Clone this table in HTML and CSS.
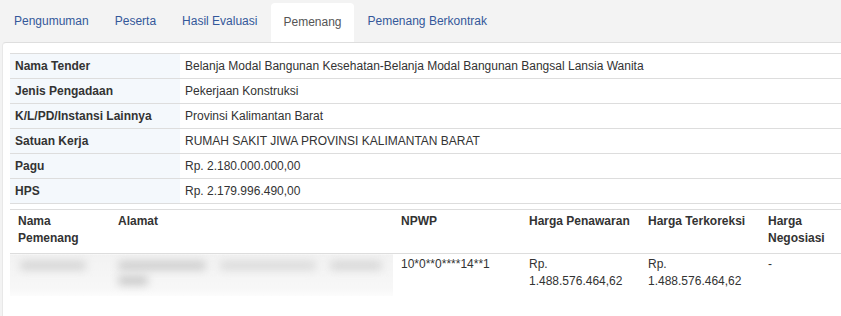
FILE: index.html
```html
<!DOCTYPE html>
<html lang="id">
<head>
<meta charset="utf-8">
<title>Pemenang</title>
<link rel="stylesheet" href="styles.css">
</head>
<body>
<ul class="tabs">
  <li class="tab"><a>Pengumuman</a></li>
  <li class="tab"><a>Peserta</a></li>
  <li class="tab"><a>Hasil Evaluasi</a></li>
  <li class="tab active"><a>Pemenang</a></li>
  <li class="tab"><a>Pemenang Berkontrak</a></li>
</ul>
<div class="panel">
  <table class="info">
    <tr><th>Nama Tender</th><td>Belanja Modal Bangunan Kesehatan-Belanja Modal Bangunan Bangsal Lansia Wanita</td></tr>
    <tr><th>Jenis Pengadaan</th><td>Pekerjaan Konstruksi</td></tr>
    <tr><th>K/L/PD/Instansi Lainnya</th><td>Provinsi Kalimantan Barat</td></tr>
    <tr><th>Satuan Kerja</th><td>RUMAH SAKIT JIWA PROVINSI KALIMANTAN BARAT</td></tr>
    <tr><th>Pagu</th><td>Rp. 2.180.000.000,00</td></tr>
    <tr><th>HPS</th><td>Rp. 2.179.996.490,00</td></tr>
  </table>
  <table class="winners">
    <thead>
      <tr>
        <th class="c-name">Nama Pemenang</th>
        <th class="c-addr">Alamat</th>
        <th class="c-npwp">NPWP</th>
        <th class="c-price">Harga Penawaran</th>
        <th class="c-price2">Harga Terkoreksi</th>
        <th class="c-neg">Harga Negosiasi</th>
      </tr>
    </thead>
    <tbody>
      <tr>
        <td class="blurred"><div class="smudge s-name"></div></td>
        <td class="blurred"><div class="smudge-row"><div class="smudge s-a1"></div><div class="smudge s-a2"></div><div class="smudge s-a3"></div></div><div class="smudge s-a4"></div></td>
        <td>10*0**0****14**1</td>
        <td>Rp.<br>1.488.576.464,62</td>
        <td>Rp.<br>1.488.576.464,62</td>
        <td>-</td>
      </tr>
    </tbody>
  </table>
</div>
</body>
</html>
```

FILE: styles.css
```css
html, body {
  margin: 0;
  padding: 0;
}
body {
  background: #f3f3f3;
  font-family: "Liberation Sans", Arial, sans-serif;
  font-size: 12px;
  color: #333;
  width: 841px;
  height: 316px;
  overflow: hidden;
}
.tabs {
  list-style: none;
  margin: 0;
  padding: 3px 0 0 0;
  display: flex;
  height: 39px;
}
.tab {
  margin-left: 2px;
  padding: 0 12px 2px;
  line-height: 15px;
  display: flex;
  align-items: center;
  border-radius: 4px 4px 0 0;
  color: #34589a;
  position: relative;
  z-index: 1;
}
.tab.active {
  background: #fff;
  color: #555;
  height: 38px;
  padding-bottom: 1px;
}
.panel {
  background: #fff;
  margin-left: 2px;
  border-top: 1px solid #dedede;
  border-left: 1px solid #e8e8e8;
  border-top-left-radius: 4px;
  padding: 10px 0 0 7px;
  height: 263px;
  overflow: hidden;
}
table {
  border-collapse: collapse;
}
.info {
  width: 840px;
}
.info th, .info td {
  border-top: 1px solid #dddddd;
  border-bottom: 1px solid #dddddd;
  height: 24px;
  padding: 0 5px;
  text-align: left;
  vertical-align: middle;
  line-height: 15px;
}
.info th {
  width: 160px;
  background: #f4f8fc;
  font-weight: bold;
}
.winners {
  margin-top: 5px;
  table-layout: fixed;
  width: 831px;
}
.winners th, .winners td {
  box-sizing: border-box;
  text-align: left;
  vertical-align: top;
  padding: 4px 8px;
  line-height: 17px;
}
.winners thead th {
  font-weight: bold;
  border-top: 1px solid #dddddd;
  border-bottom: 1px solid #dddddd;
  padding-top: 3px;
  padding-bottom: 6px;
}
.winners tbody td {
  padding-top: 2px;
  padding-bottom: 6px;
}
.c-name { width: 100px; }
.c-addr { width: 283px; }
.c-npwp { width: 128px; }
.c-price { width: 119px; }
.c-price2 { width: 120px; }
.c-neg { width: 81px; }
.blurred {
  background: linear-gradient(#f2f2f2, #f7f7f7 80%, #fcfcfc);
  overflow: hidden;
}
.smudge-row {
  display: flex;
  gap: 14px;
}
.smudge {
  background: #d4d4d4;
  filter: blur(4px);
  height: 9px;
  border-radius: 4px;
  margin-top: 5px;
}
.s-name { width: 66px; margin-left: 2px; }
.s-a1 { width: 88px; background: #cdcdcd; }
.s-a2 { width: 96px; background: #dadada; }
.s-a3 { width: 52px; background: #d6d6d6; }
.s-a4 { width: 30px; margin-top: 6px; background: #c8c8c8; }
```
